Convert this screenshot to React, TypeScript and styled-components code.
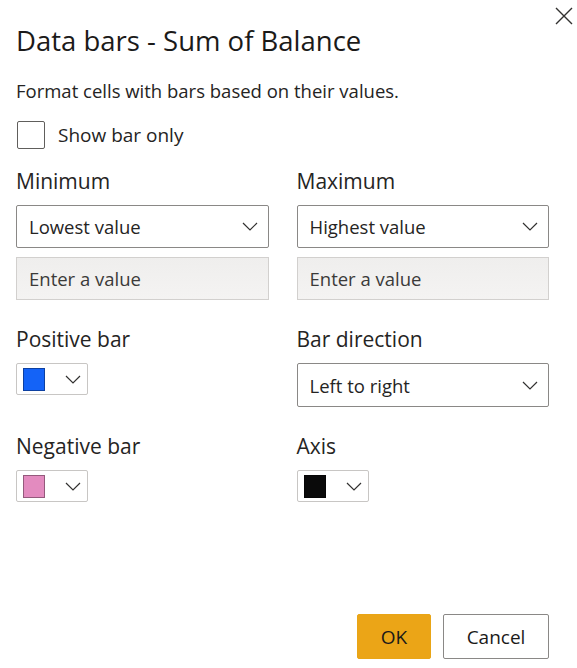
import React from "react";
import styled, { createGlobalStyle } from "styled-components";

const GlobalStyle = createGlobalStyle`
  html, body {
    margin: 0;
    padding: 0;
    background: #ffffff;
  }
  body {
    font-family: "Open Sans", "Noto Sans", sans-serif;
    color: #201f1e;
  }
`;

const Dialog = styled.div`
  width: 577px;
  height: 668px;
  box-sizing: border-box;
  padding: 0 28px 0 16px;
  display: flex;
  flex-direction: column;
`;

const Header = styled.div`
  display: flex;
  justify-content: space-between;
  align-items: flex-start;
`;

const CloseButton = styled.button`
  margin: 7px -24px 0 0;
  width: 18px;
  height: 18px;
  padding: 0;
  border: none;
  background: none;
  display: flex;
  cursor: pointer;
`;

const Title = styled.h1`
  margin: 23px 0 0;
  font-size: 27.5px;
  line-height: 36px;
  font-weight: 400;
  color: #1b1a19;
`;

const Description = styled.p`
  margin: 19px 0 0;
  font-size: 18.5px;
  line-height: 26px;
  color: #252423;
`;

const CheckRow = styled.label`
  margin-top: 17px;
  display: flex;
  align-items: center;
  gap: 13px;
  font-size: 19px;
  color: #252423;
`;

const CheckBox = styled.span`
  width: 26px;
  height: 26px;
  border: 1px solid #605e5c;
  border-radius: 2px;
  margin-left: 1px;
`;

const Grid = styled.div`
  margin-top: 18px;
  display: grid;
  grid-template-columns: 1fr 1fr;
  column-gap: 28px;
  row-gap: 25px;
`;

const Field = styled.div`
  display: flex;
  flex-direction: column;
  align-items: flex-start;
`;

const Label = styled.div`
  font-size: 21px;
  line-height: 28px;
  color: #252423;
  margin-bottom: 10px;
`;

const Select = styled.div<{ $tall?: boolean }>`
  width: 100%;
  height: ${({ $tall }) => ($tall ? "44px" : "43px")};
  box-sizing: border-box;
  border: 1px solid #8a8886;
  border-radius: 2px;
  display: flex;
  align-items: center;
  justify-content: space-between;
  padding: 0 10px 0 12px;
  font-size: 18.5px;
  color: #252423;
`;

const ValueInput = styled.div`
  margin-top: 9px;
  width: 100%;
  height: 43px;
  box-sizing: border-box;
  border: 1px solid #d2d0ce;
  background: linear-gradient(#efeeed, #f4f3f2);
  display: flex;
  align-items: center;
  padding: 0 12px;
  font-size: 18.5px;
  color: #3b3a39;
`;

const ColorPicker = styled.div`
  width: 72px;
  height: 32px;
  box-sizing: border-box;
  border: 1px solid #c8c6c4;
  border-radius: 2px;
  display: flex;
  align-items: center;
  gap: 20px;
  padding: 0 6px;
`;

const Swatch = styled.span<{ $color: string }>`
  width: 20px;
  height: 21px;
  background: ${({ $color }) => $color};
  border: 1px solid rgba(0, 0, 0, 0.35);
`;

const Footer = styled.div`
  margin-top: auto;
  margin-bottom: 9px;
  display: flex;
  justify-content: flex-end;
  gap: 12px;
`;

const Button = styled.button<{ $primary?: boolean }>`
  height: 45px;
  min-width: ${({ $primary }) => ($primary ? "74px" : "106px")};
  border-radius: 2px;
  font-family: inherit;
  font-size: 19px;
  color: #1b1a19;
  border: 1px solid ${({ $primary }) => ($primary ? "#e9a516" : "#8a8886")};
  background: ${({ $primary }) => ($primary ? "#eba517" : "#ffffff")};
  cursor: pointer;
`;

const Chevron = () => (
  <svg width="16" height="9" viewBox="0 0 16 9" fill="none">
    <path d="M1 1l7 7 7-7" stroke="#323130" strokeWidth="1.2" />
  </svg>
);

export default function App() {
  return (
    <>
      <GlobalStyle />
      <Dialog>
        <Header>
          <Title>Data bars - Sum of Balance</Title>
          <CloseButton aria-label="Close">
            <svg width="18" height="18" viewBox="0 0 18 18">
              <path d="M1 1l16 16M17 1L1 17" stroke="#323130" strokeWidth="1.4" />
            </svg>
          </CloseButton>
        </Header>
        <Description>Format cells with bars based on their values.</Description>
        <CheckRow>
          <CheckBox />
          Show bar only
        </CheckRow>
        <Grid>
          <Field>
            <Label>Minimum</Label>
            <Select>
              Lowest value
              <Chevron />
            </Select>
            <ValueInput>Enter a value</ValueInput>
          </Field>
          <Field>
            <Label>Maximum</Label>
            <Select>
              Highest value
              <Chevron />
            </Select>
            <ValueInput>Enter a value</ValueInput>
          </Field>
          <Field>
            <Label>Positive bar</Label>
            <ColorPicker>
              <Swatch $color="#1463f7" />
              <Chevron />
            </ColorPicker>
          </Field>
          <Field>
            <Label>Bar direction</Label>
            <Select $tall>
              Left to right
              <Chevron />
            </Select>
          </Field>
          <Field>
            <Label>Negative bar</Label>
            <ColorPicker>
              <Swatch $color="#e38bbf" />
              <Chevron />
            </ColorPicker>
          </Field>
          <Field>
            <Label>Axis</Label>
            <ColorPicker>
              <Swatch $color="#0a0a0a" />
              <Chevron />
            </ColorPicker>
          </Field>
        </Grid>
        <Footer>
          <Button $primary>OK</Button>
          <Button>Cancel</Button>
        </Footer>
      </Dialog>
    </>
  );
}
